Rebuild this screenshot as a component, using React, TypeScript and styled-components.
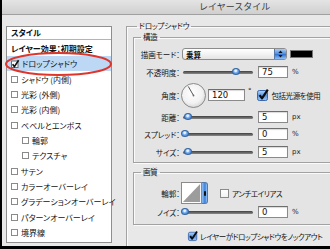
import React from "react";
import styled, { createGlobalStyle } from "styled-components";

const Global = createGlobalStyle`
  html, body { margin: 0; padding: 0; }
  body {
    width: 330px; height: 249px; overflow: hidden; background: #e8e8e8;
    font-family: "Noto Sans CJK JP", "Noto Sans", sans-serif;
    font-feature-settings: "palt";
    color: #111;
  }
`;

const Window = styled.div`
  width: 330px; height: 249px; box-sizing: border-box;
  border-left: 2px solid #000; border-bottom: 3px solid #000;
  display: flex; flex-direction: column; overflow: hidden;
  background: #e8e8e8;
`;

const TitleBar = styled.div`
  height: 14px; flex: none;
  background: linear-gradient(#e4e4e4, #cfcfcf);
  border-bottom: 1px solid #a0a0a0;
  padding-left: 197px;
  font-size: 9px; line-height: 14px; color: #3a3a3a;
  white-space: nowrap;
  font-feature-settings: normal;
`;

const Body = styled.div`
  flex: 1; display: flex; align-items: flex-start;
  padding: 6px 0 0 4px; gap: 14px; min-height: 0;
`;

/* ---------- left list ---------- */
const ListPanel = styled.div`
  position: relative; flex: none;
  margin-top: 5px; width: 106px; height: 217px; box-sizing: border-box;
  border: 1px solid #8e8e8e; background: #fff;
`;

const ListHeader = styled.div`
  height: 12px; line-height: 12px; padding-left: 4px;
  border-bottom: 1px solid #b4b4b4;
  font-size: 8px; font-weight: 700;
`;

const ListItem = styled.div<{ $h?: number; $indent?: boolean; $selected?: boolean; $bold?: boolean }>`
  display: flex; align-items: center; gap: 3px;
  height: ${(p) => p.$h ?? 15.36}px;
  padding-left: ${(p) => (p.$indent ? 15 : 4)}px;
  background: ${(p) => (p.$selected ? "#bcd8f4" : "transparent")};
  font-size: 8px; font-weight: ${(p) => (p.$bold ? 700 : 400)};
  white-space: nowrap;
`;

const SmallBox = styled.span`
  flex: none; width: 7px; height: 7px; box-sizing: border-box;
  border: 1px solid #8a8a8a; background: #fff;
`;

const Ring = styled.svg`
  position: absolute; left: -2px; top: 25px; overflow: visible;
`;

/* ---------- right groups ---------- */
const OuterGroup = styled.fieldset`
  flex: none; margin: 0; min-width: 0; width: 240px; height: 240px;
  box-sizing: border-box;
  border: none; border-top: 1px solid #a2a2a2; border-left: 1px solid #a2a2a2;
  box-shadow: inset 1px 1px 0 #fafafa;
  padding: 1px 12px 0 6px;
`;

const Legend = styled.legend<{ $ml: number }>`
  margin-left: ${(p) => p.$ml}px; padding: 0 2px;
  font-size: 7.5px; line-height: 10px; color: #111; letter-spacing: -0.2px;
`;

const SubGroup = styled.fieldset<{ $mt?: number; $pt: number; $pb: number }>`
  margin: ${(p) => p.$mt ?? 0}px 0 0 0; min-width: 0;
  border: 1px solid #a2a2a2;
  box-shadow: inset 1px 1px 0 #fafafa, 1px 1px 0 #fafafa;
  background: rgba(0, 0, 0, 0.015);
  padding: ${(p) => p.$pt}px 0 ${(p) => p.$pb}px 0;
  display: flex; flex-direction: column;
`;

const Row = styled.div<{ $h: number }>`
  display: flex; align-items: center; height: ${(p) => p.$h}px;
`;

const Label = styled.span`
  flex: none; width: 46px; text-align: right;
  font-size: 7.5px; white-space: nowrap;
`;

const Text = styled.span<{ $ml?: number }>`
  margin-left: ${(p) => p.$ml ?? 0}px; font-size: 7.5px; white-space: nowrap;
  letter-spacing: -0.45px;
`;

const Unit = styled.span<{ $ml?: number }>`
  margin-left: ${(p) => p.$ml ?? 4}px;
  font-family: "DejaVu Sans", sans-serif; font-size: 7px; color: #222;
`;

const Select = styled.div`
  flex: none; margin-left: 2px; width: 105px; height: 12px; box-sizing: border-box;
  display: flex; align-items: center; justify-content: space-between;
  border: 1px solid #8c8c8c; border-radius: 3px;
  background: linear-gradient(#ffffff, #f0f0f0 60%, #e4e4e4);
  padding-left: 3px; overflow: hidden;
  font-size: 7.5px; font-weight: 700;
`;

const Stepper = styled.span`
  flex: none; width: 11px; height: 100%;
  display: flex; align-items: center; justify-content: center;
  background: linear-gradient(#a9cdf6, #4c8de0 50%, #2d6fd0 51%, #8dc0f6);
  border-left: 1px solid #5578a8;
`;

const Swatch = styled.span`
  flex: none; margin-left: 3px; width: 23px; height: 8px;
  background: #000; border: 1px solid #777; box-sizing: border-box;
`;

const SliderWrap = styled.div<{ $ml?: number }>`
  position: relative; flex: none; margin-left: ${(p) => p.$ml ?? 3}px;
  width: 70px; height: 10px; display: flex; align-items: center;
`;

const Track = styled.span`
  width: 100%; height: 3px; border-radius: 2px;
  background: linear-gradient(#3f3f3f, #8a8a8a);
`;

const Thumb = styled.span`
  position: absolute; top: 1px; width: 8px; height: 7px; margin-left: -4px;
  border-radius: 50%; box-sizing: border-box;
  border: 1px solid #36659f;
  background: radial-gradient(circle at 45% 35%, #e2f0ff 0 18%, #73aaf0 45%, #2f6fc8 100%);
`;

const NumInput = styled.div<{ $w: number; $ml: number }>`
  flex: none; margin-left: ${(p) => p.$ml}px; width: ${(p) => p.$w}px; height: 12px;
  box-sizing: border-box; border: 1px solid #8a8a8a; border-top-color: #6e6e6e;
  background: #fff; padding-left: 3px;
  font-family: "DejaVu Sans", sans-serif; font-size: 8.5px; line-height: 10px; color: #111;
  box-shadow: inset 0 1px 1px rgba(0,0,0,0.15);
`;

const Dial = styled.svg`
  flex: none; margin-left: 1px;
`;

const Degree = styled.span`
  margin-left: 3px; align-self: flex-start; margin-top: 6px;
  font-family: "DejaVu Sans", sans-serif; font-size: 7px;
`;

const CheckIcon = styled.svg<{ $ml: number }>`
  flex: none; margin-left: ${(p) => p.$ml}px; overflow: visible;
`;

const EmptyCheck = styled.span<{ $ml: number }>`
  flex: none; margin-left: ${(p) => p.$ml}px; width: 9px; height: 9px; box-sizing: border-box;
  border: 1px solid #8a8a8a; background: linear-gradient(#fff, #f2f2f2);
`;

const Contour = styled.div`
  flex: none; margin-left: 1px; display: flex; height: 22px;
`;

const ContourSwatch = styled.svg`
  display: block; border: 1px solid #8a8a8a; box-sizing: border-box;
`;

const ContourBtn = styled.span`
  width: 6px; height: 22px; box-sizing: border-box; border-radius: 0 3px 3px 0;
  border: 1px solid #5578a8; border-left: none;
  background: linear-gradient(90deg, #8dbef4, #3c7fd8 60%, #9ac8f7);
  display: flex; align-items: center; justify-content: center;
`;

const ArrowMark = styled.span`
  width: 2px; height: 5px; background: #111; border-radius: 1px;
`;

const KnockRow = styled.div`
  display: flex; align-items: center; height: 14px;
  margin-top: 4px; padding-left: 55px;
`;

/* ---------- small drawings ---------- */
const AquaCheck = ({ size, ml }: { size: number; ml: number }) => (
  <CheckIcon $ml={ml} width={size} height={size} viewBox="0 0 12 12">
    <defs>
      <linearGradient id={`aq${size}`} x1="0" y1="0" x2="0" y2="1">
        <stop offset="0" stopColor="#b6d6f8" />
        <stop offset="0.5" stopColor="#5a96e4" />
        <stop offset="1" stopColor="#9cc8f6" />
      </linearGradient>
    </defs>
    <rect x="0.5" y="1.5" width="10" height="10" rx="1.8" fill={`url(#aq${size})`} stroke="#3a68ad" />
    <path d="M2.6 6.2 L5 9.4 L10.8 0.6" stroke="#0d0d0d" strokeWidth="2.2" fill="none" strokeLinejoin="round" />
  </CheckIcon>
);

const ListCheck = () => (
  <svg width="8" height="8" viewBox="0 0 8 8" style={{ flex: "none", overflow: "visible" }}>
    <rect x="0.5" y="1" width="6.5" height="6.5" fill="#fff" stroke="#6b6b6b" />
    <path d="M1.6 4.2 L3.4 6.6 L7.6 0.2" stroke="#111" strokeWidth="1.6" fill="none" />
  </svg>
);

type SliderProps = { pct: number; ml?: number };
const Slider = ({ pct, ml }: SliderProps) => (
  <SliderWrap $ml={ml}>
    <Track />
    <Thumb style={{ left: `${Math.max(pct * 0.7, 2)}px` }} />
  </SliderWrap>
);

const sliderRows = [
  { label: "距離：", value: "5", unit: "px", pct: 7, h: 16 },
  { label: "スプレッド：", value: "0", unit: "%", pct: 2, h: 18 },
  { label: "サイズ：", value: "5", unit: "px", pct: 7, h: 18 },
];

const listItems: { text: string; indent?: boolean }[] = [
  { text: "シャドウ (内側)" },
  { text: "光彩 (外側)" },
  { text: "光彩 (内側)" },
  { text: "ベベルとエンボス" },
  { text: "輪郭", indent: true },
  { text: "テクスチャ", indent: true },
  { text: "サテン" },
  { text: "カラーオーバーレイ" },
  { text: "グラデーションオーバーレイ" },
  { text: "パターンオーバーレイ" },
  { text: "境界線" },
];

export default function App() {
  const angle = 120;
  const rad = (angle * Math.PI) / 180;
  const nx = 12.5 + Math.cos(rad) * 10.5;
  const ny = 12.5 - Math.sin(rad) * 10.5;
  return (
    <>
      <Global />
      <Window>
        <TitleBar>レイヤースタイル</TitleBar>
        <Body>
          <ListPanel>
            <ListHeader>スタイル</ListHeader>
            <ListItem $h={16} $bold>レイヤー効果：初期設定</ListItem>
            <ListItem $selected>
              <ListCheck />
              ドロップシャドウ
            </ListItem>
            {listItems.map((it) => (
              <ListItem key={it.text} $indent={it.indent}>
                <SmallBox />
                {it.text}
              </ListItem>
            ))}
            <Ring width="107" height="24" viewBox="0 0 107 24">
              <ellipse cx="53.5" cy="12" rx="52.5" ry="11" fill="none" stroke="#e0352b" strokeWidth="2" />
            </Ring>
          </ListPanel>

          <OuterGroup>
            <Legend $ml={4}>ドロップシャドウ</Legend>
            <SubGroup $pt={3} $pb={1}>
              <Legend $ml={7}>構造</Legend>
              <Row $h={18}>
                <Label>描画モード：</Label>
                <Select>
                  乗算
                  <Stepper>
                    <svg width="5" height="8" viewBox="0 0 5 8">
                      <path d="M2.5 0.5 L4.6 3 H0.4 Z M2.5 7.5 L4.6 5 H0.4 Z" fill="#111" />
                    </svg>
                  </Stepper>
                </Select>
                <Swatch />
              </Row>
              <Row $h={18}>
                <Label>不透明度：</Label>
                <Slider pct={75} />
                <NumInput $w={30} $ml={5}>75</NumInput>
                <Unit>%</Unit>
              </Row>
              <Row $h={28}>
                <Label>角度：</Label>
                <Dial width="25" height="25" viewBox="0 0 25 25">
                  <defs>
                    <radialGradient id="dial" cx="0.45" cy="0.4" r="0.6">
                      <stop offset="0" stopColor="#ffffff" />
                      <stop offset="0.7" stopColor="#f2f2f2" />
                      <stop offset="1" stopColor="#d8d8d8" />
                    </radialGradient>
                  </defs>
                  <circle cx="12.5" cy="12.5" r="12" fill="url(#dial)" stroke="#8a8a8a" />
                  <line x1="12.5" y1="12.5" x2={nx} y2={ny} stroke="#555" strokeWidth="1" />
                  <circle cx="12.5" cy="12.5" r="0.9" fill="#666" />
                </Dial>
                <NumInput $w={37} $ml={2}>120</NumInput>
                <Degree>°</Degree>
                <AquaCheck size={12} ml={5} />
                <Text $ml={3}>包括光源を使用</Text>
              </Row>
              {sliderRows.map((r) => (
                <Row key={r.label} $h={r.h}>
                  <Label>{r.label}</Label>
                  <Slider pct={r.pct} />
                  <NumInput $w={30} $ml={5}>{r.value}</NumInput>
                  <Unit>{r.unit}</Unit>
                </Row>
              ))}
            </SubGroup>

            <SubGroup $mt={4} $pt={3} $pb={6}>
              <Legend $ml={7}>画質</Legend>
              <Row $h={26}>
                <Label>輪郭：</Label>
                <Contour>
                  <ContourSwatch width="21" height="22" viewBox="0 0 21 22">
                    <rect x="0" y="0" width="21" height="22" fill="#fff" />
                    <polygon points="1,21 20,1 20,21" fill="#9c9c9c" />
                  </ContourSwatch>
                  <ContourBtn>
                    <ArrowMark />
                  </ContourBtn>
                </Contour>
                <EmptyCheck $ml={12} />
                <Text $ml={3}>アンチエイリアス</Text>
              </Row>
              <Row $h={12}>
                <Label>ノイズ：</Label>
                <Slider pct={2} />
                <NumInput $w={30} $ml={5}>0</NumInput>
                <Unit>%</Unit>
              </Row>
            </SubGroup>

            <KnockRow>
              <AquaCheck size={10} ml={0} />
              <Text $ml={2}>レイヤーがドロップシャドウをノックアウト</Text>
            </KnockRow>
          </OuterGroup>
        </Body>
      </Window>
    </>
  );
}
